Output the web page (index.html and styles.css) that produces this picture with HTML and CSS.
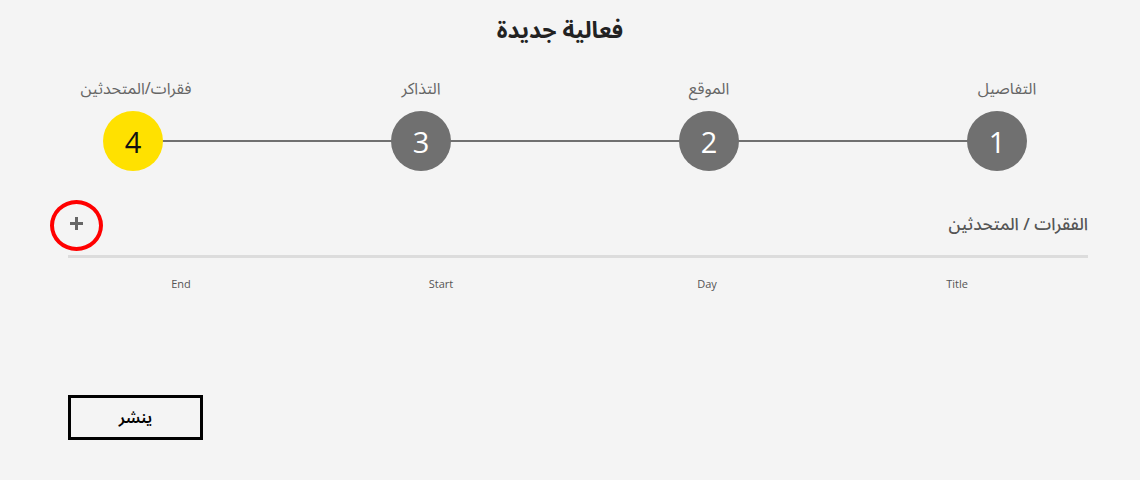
FILE: index.html
```html
<!DOCTYPE html>
<html lang="ar">
<head>
<meta charset="utf-8">
<link rel="stylesheet" href="styles.css">
</head>
<body>
<div class="page">
  <h1 class="title">فعالية جديدة</h1>
  <div class="stepper" dir="rtl">
    <div class="step"><span class="step-label first">التفاصيل</span><span class="step-circle">1</span></div>
    <div class="step"><span class="step-label">الموقع</span><span class="step-circle">2</span></div>
    <div class="step"><span class="step-label">التذاكر</span><span class="step-circle">3</span></div>
    <div class="step"><span class="step-label last">فقرات/المتحدثين</span><span class="step-circle active">4</span></div>
  </div>
  <div class="section-head" dir="rtl">
    <span class="section-title">الفقرات / المتحدثين</span>
    <button class="add-btn" type="button" aria-label="إضافة">
      <svg width="15" height="15" viewBox="0 0 15 15"><path d="M7.5 1v13M1 7.5h13" stroke="#666" stroke-width="3" fill="none"/></svg>
    </button>
  </div>
  <div class="table-head" dir="rtl">
    <span>Title</span><span>Day</span><span>Start</span><span>End</span>
  </div>
  <div class="actions">
    <button class="publish" type="button">ينشر</button>
  </div>
</div>
</body>
</html>
```

FILE: styles.css
```css
html, body {
  margin: 0;
  padding: 0;
  background: #f4f4f4;
}
body {
  font-family: "Noto Sans Arabic", "Noto Sans", "DejaVu Sans", sans-serif;
  color: #222;
  width: 1140px;
  height: 480px;
  overflow: hidden;
}
.page {
  display: flex;
  flex-direction: column;
}
.title {
  margin: 16px 20px 0 0;
  text-align: center;
  font-size: 23px;
  font-weight: 700;
  line-height: 30px;
  color: #222;
}
.stepper {
  position: relative;
  display: flex;
  gap: 88px;
  margin: 32px 0 0 33px;
  width: 1064px;
}
.stepper::before {
  content: "";
  position: absolute;
  top: 62px;
  left: 100px;
  right: 100px;
  height: 2px;
  background: #707070;
}
.step {
  position: relative;
  width: 200px;
  display: flex;
  flex-direction: column;
  align-items: center;
}
.step-label {
  font-size: 16px;
  line-height: 22px;
  color: #666;
  height: 22px;
}
.step-label.first {
  margin-right: -20px;
}
.step-label.last {
  margin-right: -6px;
}
.step-circle {
  margin-top: 11px;
  width: 60px;
  height: 60px;
  border-radius: 50%;
  background: #707070;
  color: #fff;
  display: flex;
  align-items: center;
  justify-content: center;
  font-family: "Open Sans", "Noto Sans", sans-serif;
  font-size: 29px;
  font-weight: 400;
}
.step-circle.active {
  background: #ffe100;
  color: #111;
}
.section-head {
  display: flex;
  justify-content: space-between;
  align-items: center;
  margin: 28px 52px 0 50px;
  height: 54px;
}
.section-title {
  font-size: 17px;
  font-weight: 500;
  color: #555;
  margin-top: -2px;
}
.add-btn {
  width: 53px;
  height: 51px;
  border: 4px solid #f00;
  border-radius: 50%;
  background: transparent;
  padding: 0 0 4px;
  margin-top: -2px;
  display: flex;
  align-items: center;
  justify-content: center;
}
.table-head {
  margin: 2px 52px 0 68px;
  border-top: 3px solid #dcdcdc;
  display: grid;
  grid-template-columns: 262px 238px 294px 226px;
  padding-top: 18px;
  font-family: "Open Sans", "Noto Sans", sans-serif;
  font-size: 11px;
  font-weight: 500;
  color: #555;
  line-height: 16px;
}
.table-head span {
  text-align: center;
}
.actions {
  margin: 103px 0 0 68px;
}
.publish {
  width: 135px;
  height: 45px;
  border: 3px solid #000;
  background: transparent;
  font-family: "Noto Sans Arabic", "Noto Sans", "DejaVu Sans", sans-serif;
  font-size: 16px;
  font-weight: 600;
  color: #000;
}
```
